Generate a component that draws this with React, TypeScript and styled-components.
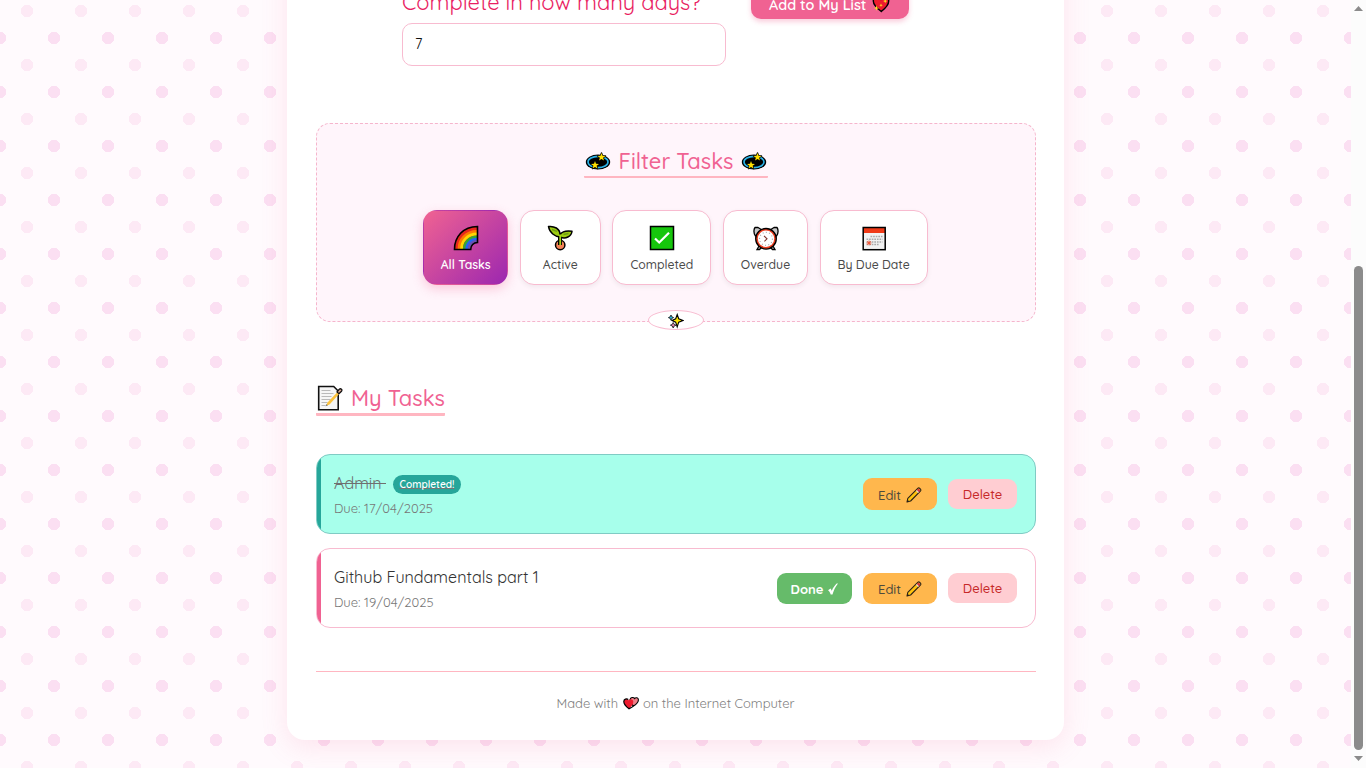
import React from 'react';
import styled, { createGlobalStyle, css } from 'styled-components';

const Global = createGlobalStyle`
  * { box-sizing: border-box; }
  html, body { margin: 0; height: 768px; overflow: hidden; }
  body { font-family: Quicksand, Lato, sans-serif; color: #4a4a4a; }
  svg { display: block; flex: none; }
`;

const Page = styled.div`
  display: flex;
  height: 768px;
  overflow: hidden;
`;

const Backdrop = styled.main`
  flex: 1;
  overflow: hidden;
  background:
    radial-gradient(circle at 27px 27px, #fde9f5 6px, transparent 6.3px) 0 -16px / 54px 54px,
    radial-gradient(circle at 27px 27px, #fbdff2 6px, transparent 6.3px) 27px 11px / 54px 54px,
    #fffafd;
`;

const Card = styled.div`
  display: flex;
  flex-direction: column;
  width: 777px;
  height: 800px;
  margin: -60px auto 0;
  padding: 49px 28px 0 29px;
  background: #fff;
  border-radius: 18px;
  box-shadow: 0 7px 27px rgba(240, 98, 146, 0.15);
`;

const Text = styled.span`
  white-space: pre;
`;

const Form = styled.form`
  display: flex;
  gap: 25px;
  align-items: flex-start;
  padding-left: 86px;
`;

const Field = styled.label`
  display: flex;
  flex-direction: column;
  gap: 8px;
  width: 324px;
  color: #e91e63;
  font-size: 21.9px;
  font-weight: 400;
  line-height: 26px;
`;

const Input = styled.div`
  height: 43px;
  padding-left: 12px;
  border: 1px solid #f8bbd0;
  border-radius: 10px;
  background: #fff;
  color: #111;
  font-size: 14.4px;
  font-weight: 400;
  line-height: 41px;
`;

const AddButton = styled.button`
  display: flex;
  align-items: center;
  gap: 6px;
  width: 158px;
  height: 29px;
  margin: 1px 0 0;
  padding: 0 0 0 18px;
  border: 0;
  border-radius: 0 0 10px 10px;
  background: #f06292;
  box-shadow: 0 3px 5px rgba(240, 98, 146, 0.3);
  color: #fff;
  font: 600 14.4px/18px Quicksand, Lato, sans-serif;

  svg { margin-top: -2px; }
`;

const FilterPanel = styled.section`
  display: flex;
  flex-direction: column;
  align-items: center;
  height: 199px;
  margin-top: 57px;
  padding-top: 23px;
  border: 1px dashed #f5b5cc;
  border-radius: 14px;
  background: #fff5fb;
`;

const Heading = styled.h2<{ $rule: number }>`
  display: flex;
  align-items: center;
  gap: 8px;
  margin: 0;
  padding: 0 1px 2px;
  border-bottom: ${(p) => p.$rule}px solid #ffb6c1;
  border-radius: 1px;
  color: #f06292;
  font-size: 21.9px;
  font-weight: 500;
  line-height: 27px;
`;

const Tabs = styled.div`
  display: flex;
  gap: 11.6px;
  margin-top: 32px;
  padding-right: 1.2px;
`;

const Tab = styled.button<{ $w: number; $active?: boolean }>`
  display: flex;
  flex-direction: column;
  align-items: center;
  gap: 5px;
  width: ${(p) => p.$w}px;
  height: 75px;
  padding: 14px 0 0;
  border: 1px solid #f8bbd0;
  border-radius: 14px;
  background: #fff;
  box-shadow: 0 2px 5px rgba(0, 0, 0, 0.06);
  color: #4a4a4a;
  font: 500 12.24px/18px Quicksand, Lato, sans-serif;
  ${(p) =>
    p.$active &&
    css`
      border-color: transparent;
      background: linear-gradient(135deg, #f06292, #9c27b0);
      box-shadow: 0 4px 11px rgba(240, 98, 146, 0.3);
      color: #fff;
      font-weight: 600;
    `}
`;

const Sparkle = styled.div`
  display: flex;
  align-items: center;
  justify-content: center;
  align-self: center;
  width: 56px;
  height: 20px;
  margin: -12px 0 -8px;
  padding: 1px 1px 0 0;
  border: 1px solid #f8bbd0;
  border-radius: 50%;
  background: #fff;
  z-index: 1;
`;

const ListHeading = styled(Heading)`
  align-self: flex-start;
  width: 129px;
  margin-top: 62px;
`;

const TaskList = styled.div`
  display: flex;
  flex-direction: column;
  gap: 14px;
  margin-top: 38px;
`;

const Task = styled.article<{ $done?: boolean }>`
  display: flex;
  align-items: center;
  height: 80px;
  padding-right: 18px;
  overflow: hidden;
  border: 1px solid ${(p) => (p.$done ? '#80cbc4' : '#f8bbd0')};
  border-radius: 14px;
  background: ${(p) => (p.$done ? '#a7ffeb' : '#fff')};
`;

const Stripe = styled.div<{ $done?: boolean }>`
  align-self: stretch;
  width: 4px;
  background: ${(p) => (p.$done ? '#26a69a' : '#f06292')};
`;

const TaskInfo = styled.div`
  display: flex;
  flex: 1;
  flex-direction: column;
  gap: 5px;
  padding-left: 13px;
`;

const TaskName = styled.div<{ $done?: boolean }>`
  display: flex;
  align-items: center;
  gap: 8px;
  height: 22px;
  color: ${(p) => (p.$done ? '#6f6f6f' : '#333')};
  font-size: 16.1px;
  font-weight: 400;
  line-height: 22px;
`;

const Struck = styled(Text)`
  width: 51px;
  text-decoration: line-through;
`;

const Badge = styled.span`
  width: 68px;
  height: 19px;
  margin-top: 3px;
  border-radius: 10px;
  background: #26a69a;
  color: #fff;
  font-size: 10.1px;
  font-weight: 600;
  line-height: 19px;
  text-align: center;
  text-decoration: underline 1px #757575;
  text-underline-offset: 0;
  text-decoration-skip-ink: none;
`;

const Due = styled.div`
  color: #777;
  font-size: 13px;
  line-height: 18px;
`;

const Actions = styled.div<{ $top?: boolean }>`
  display: flex;
  gap: 11px;
  align-items: ${(p) => (p.$top ? 'flex-start' : 'center')};
`;

const tones = {
  done: css`background: #66bb6a; color: #fff; font-weight: 700;`,
  edit: css`background: #ffb74d; color: #4e4a3c; padding-top: 2px;`,
  remove: css`background: #ffcdd2; color: #c62828;`,
};

const Action = styled.button<{ $tone: keyof typeof tones; $w: number; $h: number }>`
  display: flex;
  align-items: center;
  justify-content: center;
  gap: 5px;
  width: ${(p) => p.$w}px;
  height: ${(p) => p.$h}px;
  padding: 1px 0 0;
  border: 0;
  border-radius: 9px;
  font: 500 13px/18px Quicksand, Lato, sans-serif;
  ${(p) => tones[p.$tone]}
  ${(p) => p.$tone === 'remove' && 'padding-top: 0;'}
`;

const Footer = styled.footer`
  display: flex;
  justify-content: center;
  align-items: center;
  gap: 4.5px;
  margin-top: 43px;
  padding: 22px 1px 0 0;
  border-top: 1px solid #ffb6c1;
  color: #808080;
  font-size: 12.96px;
  line-height: 18px;
`;

const Scrollbar = styled.div`
  display: flex;
  flex-direction: column;
  align-items: center;
  width: 15px;
  padding: 6px 0 7px;
  background: #fcfcfc;
`;

const Thumb = styled.div`
  width: 9px;
  height: 484px;
  margin: 255px 0 6px;
  border-radius: 5px;
  background: #8b8b8b;
`;

const Dizzy = () => (
  <svg width="26" height="24" viewBox="0 0 26 24">
    <ellipse cx="13" cy="13" rx="12.2" ry="7.6" fill="#000" />
    <ellipse cx="13" cy="13" rx="10" ry="5.6" fill="none" stroke="#2bb3e8" strokeWidth="1.6" />
    <g fill="#ffe000" stroke="#000" strokeWidth="1.400" strokeLinejoin="round" paintOrder="stroke">
      <path d="M16.500 4l1 2.800 3 .1-2.400 1.800.9 2.900-2.500-1.700-2.500 1.700.9-2.900-2.400-1.800 3-.1z" />
      <path d="M10 12l1 2.800 3 .1-2.400 1.800.9 2.900-2.500-1.700-2.500 1.700.9-2.900L6 14.900l3-.1z" />
    </g>
  </svg>
);

const Rainbow = () => (
  <svg width="26" height="26" viewBox="0 0 26 26">
    <path d="M1 24.5C1 12 10 1.5 24.5 1.5v16c-4 0-6.8 3-6.8 7z" fill="#e8271c" />
    <g fill="none" strokeWidth="2.8">
      <path d="M6 24C6 14.500 13 6.500 24 6.500" stroke="#ff7a00" />
      <path d="M8.500 24C8.500 16 14.500 9 24 9" stroke="#ffd800" />
      <path d="M11.300 24C11.300 17.300 16.500 11.800 24 11.800" stroke="#35a935" />
      <path d="M13.700 24C13.700 18.500 18 14.200 24 14.200" stroke="#2467f0" />
      <path d="M16 24C16 19.500 19.500 16.500 24 16.500" stroke="#6751b5" />
    </g>
    <path d="M1.500 24.500C1.500 12 10 1.500 24.500 1.500v16c-4 0-6.800 3-6.800 7z" fill="none" stroke="#000" strokeWidth="1.6" />
  </svg>
);

const Seedling = () => (
  <svg width="26" height="26" viewBox="0 0 26 26">
    <circle cx="13.200" cy="20" r="4.700" fill="#f58255" stroke="#000" strokeWidth="1.500" />
    <path d="M13 20v-9" stroke="#000" strokeWidth="4" />
    <path d="M13 12C8 11.500 2.500 8 1.500 1.500 7 .8 13 3.500 13 9.500 15.500 6 20 5.500 25 6.200 24.500 11.500 18.500 14.500 13 12z" fill="#9dcc12" stroke="#000" strokeWidth="1.500" strokeLinejoin="round" />
    <path d="M5 4.500l5 1.800M16.500 9.500l5-1" stroke="#6f9c16" strokeWidth="1.400" />
    <path d="M13.200 9.500V20" stroke="#a5d41a" strokeWidth="1.800" />
  </svg>
);

const Check = () => (
  <svg width="26" height="26" viewBox="0 0 26 26">
    <rect x="1.500" y="1.500" width="23" height="23" fill="#16c60c" stroke="#000" strokeWidth="1.500" />
    <path d="M6 13.500l4.200 4L20 7.800" fill="none" stroke="#fff" strokeWidth="2.200" />
  </svg>
);

const Alarm = () => (
  <svg width="26" height="26" viewBox="0 0 26 26">
    <path d="M6 21l-2 3.500h2.500L9 22M20 21l2 3.500h-2.500L17 22" fill="#ccc" stroke="#000" strokeWidth="1.300" />
    <g fill="#c7c7c7" stroke="#000" strokeWidth="1.300" strokeLinejoin="round">
      <path d="M2.500 11C.2 8 .8 4 2 2.500h3l4 2.500z" />
      <path d="M23.500 11c2.300-3 1.700-7 .5-8.500h-3L17 5z" />
    </g>
    <circle cx="13" cy="13.800" r="10.300" fill="#e93b1c" stroke="#000" strokeWidth="1.300" />
    <circle cx="13" cy="13.800" r="8.200" fill="#fff" />
    <circle cx="13" cy="13.800" r="6.500" fill="none" stroke="#aaa" strokeWidth="1.200" strokeDasharray="1 2.300" />
    <path d="M11 10.800l3 3-2.600 2.500" fill="none" stroke="#7c342c" strokeWidth="1.100" />
  </svg>
);

const Calendar = () => (
  <svg width="26" height="26" viewBox="0 0 26 26">
    <rect x="2.200" y="2.500" width="22" height="22.200" fill="#f2f2f2" />
    <rect x="2.200" y="2.500" width="22" height="5.500" fill="#f03a17" />
    <path d="M9.500 11.500h12M5.500 14.200h16M5.500 16.900h16M5.500 19.600h13" stroke="#aaa" strokeWidth="1.500" strokeDasharray="1.700 .9" />
    <path d="M8 15.500v4.800M5.600 18h4.800M6.300 16.300l3.400 3.400M9.700 16.300l-3.400 3.400" stroke="#f15a3b" strokeWidth="1" />
    <rect x="2.200" y="2.500" width="22" height="22.200" fill="none" stroke="#000" strokeWidth="1.500" />
  </svg>
);

const Stars = () => (
  <svg width="16" height="16" viewBox="0 0 16 16">
    <path d="M9.200 1.500l1.500 4.300L15 7.500l-4.300 1.700L9.200 14 7.700 9.200 4 7.500l3.700-1.700z" fill="#ffe600" stroke="#000" strokeWidth="1.100" />
    <path d="M3 2l.8 1.800 1.800.8-1.800.8L3 7.200l-.8-1.800-1.800-.8 1.800-.8z" fill="#21b6e5" stroke="#222" strokeWidth=".9" />
    <path d="M5.200 9.500l.9 1.900 1.900.8-1.900.8-.9 2-.9-2-1.900-.8 1.900-.8z" fill="#ee82ae" stroke="#222" strokeWidth=".9" />
  </svg>
);

const Memo = () => (
  <svg width="26" height="27" viewBox="0 0 26 27">
    <path d="M1.700 2.500h15l4.500 4.500v18.700H1.700z" fill="#f5f5f5" stroke="#111" strokeWidth="1.600" />
    <path d="M4.500 6.500h9M4.500 9.500h12M4.500 12.500h10M4.500 15.500h9M4.500 18.500h6M4.500 21.500h4" stroke="#b9b9b9" strokeWidth="1.100" />
    <path d="M9 22l1.500-3.500L20.500 8l1.800 1.800L12.500 20.500z" fill="#fcc23c" />
    <path d="M8.500 22.300l1-2.300 1.400 1.400z" fill="#777" />
    <path d="M20 8l2.300-2.800c1.500-1.200 3.500.6 2.200 2L22 9.700z" fill="#d9a58f" stroke="#111" strokeWidth="1.300" />
  </svg>
);

const Pencil = () => (
  <svg width="16" height="16" viewBox="0 0 16 16">
    <path d="M1 15l.8-3.700L12 1.200c1-1 3.600 1.300 2.600 2.600L4.600 14z" fill="#ffc20e" stroke="#2b2118" strokeWidth="1.100" strokeLinejoin="round" />
    <path d="M12 1.900c.7-.7 2.600 1.100 2 2l-1.300 1.300-2-2z" fill="#d92d43" />
    <path d="M10.800 3.100l2.100 2.100-.8.8L10 3.900z" fill="#ddd" />
    <path d="M1 15l.6-2.200 1.500 1.500z" fill="#2b2118" />
  </svg>
);

const Tick = () => (
  <svg width="10" height="12" viewBox="0 0 10 12">
    <path d="M0 7.200l2.600-1.700 1.200 2.200C5 4.800 6.800 2.200 8.700.5H10C7.500 3.500 5.700 7.300 4.500 11.500H2.700C2.200 9.600 1.300 8.200 0 7.200z" fill="#fff" />
  </svg>
);

const SparklingHeart = () => (
  <svg width="18" height="18" viewBox="0 0 18 18">
    <path d="M9.300 16.500C5 13.300 1.300 9.500 1.300 6c0-4.300 5.700-5.500 7.700-2 2-3.500 7.700-2.300 7.700 2 0 3.300-3.200 7.200-7.400 10.500z" fill="#ed1b2e" stroke="#000" strokeWidth="1.400" />
    <path d="M13.200 4l.6 1.500 1.500.6-1.500.6-.6 1.500-.6-1.500-1.500-.6 1.500-.6zM9 8.500l.5 1.200 1.200.5-1.200.5L9 12l-.5-1.300-1.200-.5 1.200-.5zM4.500 10.500l.7 2 2 .6-2 .7-.7 2-.7-2-2-.7 2-.6z" fill="#ffdf22" />
  </svg>
);

const TwoHearts = () => (
  <svg width="16" height="14" viewBox="0 0 16 14">
    <path d="M10.500 10C8 8 6.500 6 7 3.700 7.600 1.300 10.400.8 11.500 2.500c1.400-1.500 4-.8 3.900 1.500-.1 2.300-2.400 4.500-4.900 6z" fill="#ef7f88" stroke="#000" strokeWidth="1.100" />
    <path d="M6 12.700C3.200 10.500.7 8.200.8 5.400.9 2.700 4.300 2 5.700 4.200 7.200 2.300 10.300 3.200 10.300 5.800c0 2.700-2 5-4.300 6.900z" fill="#ed1b2e" />
    <path d="M10.300 10.200C9.500 11.200 7.500 12 6 12.700 3.200 10.500.7 8.200.8 5.400.9 3.200 3.500 2.300 5.300 3.500" fill="none" stroke="#000" strokeWidth="1.200" />
  </svg>
);

const Arrow = ({ down }: { down?: boolean }) => (
  <svg width="9" height="5" viewBox="0 0 9 5">
    <path d={down ? 'M0 0h9L4.500 5z' : 'M0 5h9L4.500 0z'} fill="#8b8b8b" />
  </svg>
);

const filters = [
  { label: 'All Tasks', icon: <Rainbow />, width: 85, active: true },
  { label: 'Active', icon: <Seedling />, width: 81 },
  { label: 'Completed', icon: <Check />, width: 99 },
  { label: 'Overdue', icon: <Alarm />, width: 85 },
  { label: 'By Due Date', icon: <Calendar />, width: 108 },
];

export default function App() {
  return (
    <Page>
      <Global />
      <Backdrop>
        <Card>
          <Form>
            <Field>
              <Text>Complete in how many days?</Text>
              <Input>7</Input>
            </Field>
            <AddButton type="button">
              <Text>Add to My List</Text>
              <SparklingHeart />
            </AddButton>
          </Form>

          <FilterPanel>
            <Heading $rule={2}>
              <Dizzy />
              <Text>Filter Tasks</Text>
              <Dizzy />
            </Heading>
            <Tabs>
              {filters.map((f) => (
                <Tab key={f.label} $w={f.width} $active={f.active}>
                  {f.icon}
                  <Text>{f.label}</Text>
                </Tab>
              ))}
            </Tabs>
          </FilterPanel>
          <Sparkle>
            <Stars />
          </Sparkle>

          <ListHeading $rule={3}>
            <Memo />
            <Text>My Tasks</Text>
          </ListHeading>

          <TaskList>
            <Task $done>
              <Stripe $done />
              <TaskInfo>
                <TaskName $done>
                  <Struck>{'Admin '}</Struck>
                  <Badge>Completed!</Badge>
                </TaskName>
                <Due>Due: 17/04/2025</Due>
              </TaskInfo>
              <Actions>
                <Action $tone="edit" $w={74} $h={32}>
                  <Text>Edit</Text>
                  <Pencil />
                </Action>
                <Action $tone="remove" $w={69} $h={30}>
                  Delete
                </Action>
              </Actions>
            </Task>
            <Task>
              <Stripe />
              <TaskInfo>
                <TaskName>Github Fundamentals part 1</TaskName>
                <Due>Due: 19/04/2025</Due>
              </TaskInfo>
              <Actions $top>
                <Action $tone="done" $w={75} $h={31}>
                  <Text>Done</Text>
                  <Tick />
                </Action>
                <Action $tone="edit" $w={74} $h={31}>
                  <Text>Edit</Text>
                  <Pencil />
                </Action>
                <Action $tone="remove" $w={69} $h={30}>
                  Delete
                </Action>
              </Actions>
            </Task>
          </TaskList>

          <Footer>
            <Text>Made with</Text>
            <TwoHearts />
            <Text>on the Internet Computer</Text>
          </Footer>
        </Card>
      </Backdrop>
      <Scrollbar>
        <Arrow />
        <Thumb />
        <Arrow down />
      </Scrollbar>
    </Page>
  );
}
